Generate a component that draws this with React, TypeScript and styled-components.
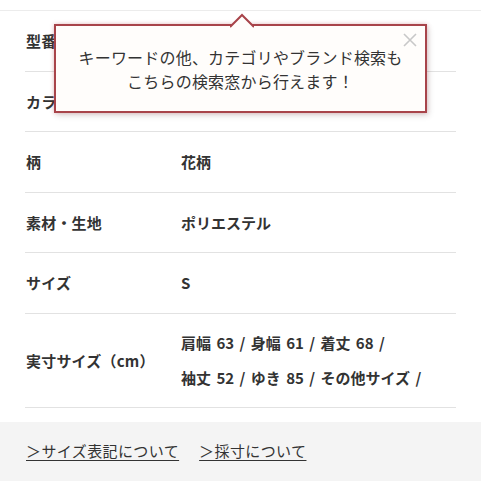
import React from 'react'
import styled, { createGlobalStyle } from 'styled-components'

const GlobalStyle = createGlobalStyle`
  html, body {
    margin: 0;
    padding: 0;
    background: #fff;
  }
  body {
    font-family: 'Noto Sans CJK JP', 'Noto Sans', sans-serif;
    color: #333;
  }
`

const Page = styled.div`
  position: relative;
  width: 481px;
  height: 481px;
  overflow: hidden;
  background: #fff;
`

const TopBar = styled.div`
  height: 10px;
  border-bottom: 1px solid #ececec;
`

const Table = styled.div`
  padding: 0 25px;
`

const Row = styled.div<{ $tall?: boolean }>`
  display: grid;
  grid-template-columns: 155px 1fr;
  align-items: center;
  height: ${(p) => (p.$tall ? '93px' : '59.5px')};
  border-bottom: 1px solid #e2e2e2;
  font-size: 15px;
  font-weight: 700;
  padding-left: 1px;
`

const Label = styled.div`
  letter-spacing: 0.2px;
`

const Value = styled.div`
  line-height: 35px;
  word-spacing: 2px;
`

const Footer = styled.div`
  margin-top: 14px;
  background: #f4f4f4;
  height: 60px;
  padding: 0 26px;
  display: flex;
  align-items: center;
  gap: 20px;
`

const FooterLink = styled.a`
  font-size: 15px;
  letter-spacing: 0.4px;
  color: #333;
  text-decoration: underline;
  text-underline-offset: 3px;
  margin-top: -2px;
`

const Tooltip = styled.div`
  position: absolute;
  left: 54px;
  top: 24px;
  width: 369px;
  height: 83px;
  border: 2px solid #a8444a;
  background: #fffdfb;
  box-shadow: 0 0 4px rgba(200, 80, 90, 0.35), 2px 3px 6px rgba(0, 0, 0, 0.12);
  display: flex;
  align-items: center;
  justify-content: center;
  text-align: center;
  font-size: 16px;
  letter-spacing: 0.2px;
  line-height: 24px;
  font-weight: 400;
  color: #333;
  padding-top: 1px;
  padding-bottom: 1px;
  box-sizing: content-box;
`

const Arrow = styled.svg`
  position: absolute;
  left: 174px;
  top: -13px;
`

const Close = styled.svg`
  position: absolute;
  right: 8px;
  top: 7px;
`

export default function App() {
  return (
    <Page>
      <GlobalStyle />
      <TopBar />
      <Table>
        <Row>
          <Label>型番</Label>
          <Value></Value>
        </Row>
        <Row>
          <Label>カラー</Label>
          <Value></Value>
        </Row>
        <Row>
          <Label>柄</Label>
          <Value>花柄</Value>
        </Row>
        <Row>
          <Label>素材・生地</Label>
          <Value>ポリエステル</Value>
        </Row>
        <Row>
          <Label>サイズ</Label>
          <Value>S</Value>
        </Row>
        <Row $tall>
          <Label>実寸サイズ（cm）</Label>
          <Value>
            肩幅 63 / 身幅 61 / 着丈 68 /<br />
            袖丈 52 / ゆき 85 / その他サイズ /
          </Value>
        </Row>
      </Table>
      <Footer>
        <FooterLink>＞サイズ表記について</FooterLink>
        <FooterLink>＞採寸について</FooterLink>
      </Footer>
      <Tooltip>
        <Arrow width="24" height="15" viewBox="0 0 24 15">
          <path d="M0 14 L12 2 L24 14" fill="#fffdfb" stroke="#a8444a" strokeWidth="2" />
        </Arrow>
        <Close width="14" height="14" viewBox="0 0 14 14">
          <path d="M1 1 L13 13 M13 1 L1 13" stroke="#c8c8c8" strokeWidth="1.6" />
        </Close>
        キーワードの他、カテゴリやブランド検索も
        <br />
        こちらの検索窓から行えます！
      </Tooltip>
    </Page>
  )
}
